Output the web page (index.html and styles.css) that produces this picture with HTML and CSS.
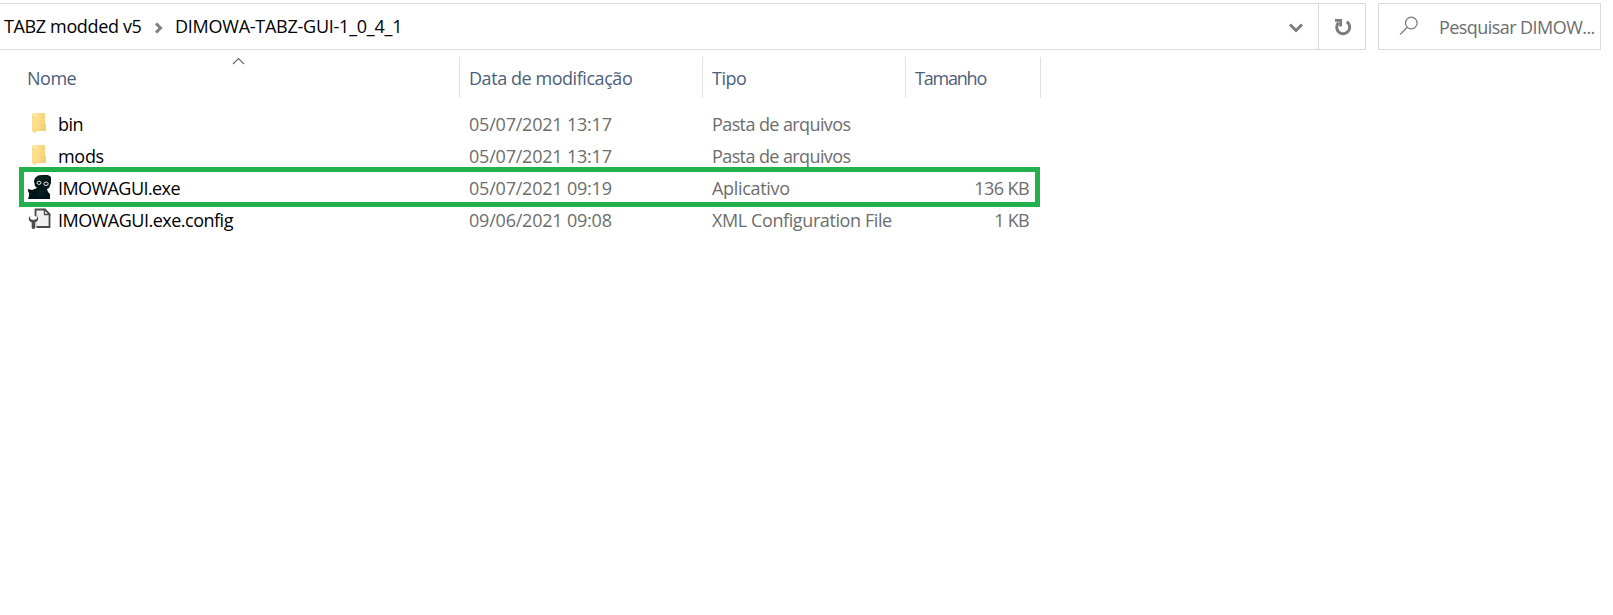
FILE: index.html
```
<!DOCTYPE html>
<html lang="pt-BR">
<head>
<meta charset="utf-8">
<title>DIMOWA-TABZ-GUI-1_0_4_1</title>
<link rel="stylesheet" href="styles.css">
</head>
<body>
<header class="toolbar">
  <nav class="address">
    <span class="crumb crumb-parent">TABZ modded v5</span>
    <svg class="crumb-arrow" width="10" height="12" viewBox="0 0 10 12"><path d="M2 1.500 6.500 6 2 10.500" fill="none" stroke="#808080" stroke-width="3"/></svg>
    <span class="crumb crumb-current">DIMOWA-TABZ-GUI-1_0_4_1</span>
    <svg class="dropdown" width="16" height="12" viewBox="0 0 16 12"><path d="M2 2.500 8 8.500 14 2.500" fill="none" stroke="#7c7c7c" stroke-width="3"/></svg>
    <button class="refresh" aria-label="Atualizar">
      <svg width="18" height="18" viewBox="0 0 18 18"><path d="M4.600 4.600A6.500 6.500 0 1 0 12.800 3.800" fill="none" stroke="#7c7c7c" stroke-width="3"/><path d="M1 1H8V8.500H5.300V3.800H1Z" fill="#7c7c7c"/></svg>
    </button>
  </nav>
  <div class="search">
    <svg width="20" height="20" viewBox="0 0 20 20"><circle cx="12.300" cy="7" r="5.800" fill="none" stroke="#777" stroke-width="1.200"/><path d="M8.200 11.200 1 18.600" stroke="#777" stroke-width="1.300"/></svg>
    <span class="search-text">Pesquisar DIMOW...</span>
  </div>
</header>

<main class="files">
  <div class="columns">
    <div class="column name-column"><span class="label-name">Nome</span>
      <svg class="sort" width="13" height="8" viewBox="0 0 13 8"><path d="M1 7 6.500 1.500 12 7" fill="none" stroke="#666" stroke-width="1.100"/></svg>
    </div>
    <div class="column"><span class="label-date">Data de modificação</span></div>
    <div class="column"><span class="label-type">Tipo</span></div>
    <div class="column"><span class="label-size">Tamanho</span></div>
  </div>

  <div class="row">
    <div class="name"><svg class="icon" width="26" height="26" viewBox="0 0 26 26"><defs><linearGradient id="folder" x1="0" x2="1" y1="0" y2="0.400"><stop offset="0" stop-color="#fde8a4"/><stop offset="1" stop-color="#f5d071"/></linearGradient></defs><path d="M7 2H19V13H20V20H10V22Z" fill="url(#folder)"/><path d="M6 2 10 4.500V22.500L6 20.500Z" fill="#fbdd8b"/><path d="M6 2H7.500L10 4.500V6L6 3Z" fill="#ffedb8"/></svg><span class="text-bin">bin</span></div>
    <div class="date">05/07/2021 13:17</div>
    <div class="type type-folder">Pasta de arquivos</div>
    <div class="size"></div>
  </div>
  <div class="row">
    <div class="name"><svg class="icon" width="26" height="26" viewBox="0 0 26 26"><path d="M7 2H19V13H20V20H10V22Z" fill="url(#folder)"/><path d="M6 2 10 4.500V22.500L6 20.500Z" fill="#fbdd8b"/><path d="M6 2H7.500L10 4.500V6L6 3Z" fill="#ffedb8"/></svg><span class="text-mods">mods</span></div>
    <div class="date">05/07/2021 13:17</div>
    <div class="type type-folder">Pasta de arquivos</div>
    <div class="size"></div>
  </div>
  <div class="row marked">
    <div class="name"><svg class="icon" width="26" height="26" viewBox="0 0 26 26"><path d="M12 .5 16 0H22L25 2V8L23 13 21 14 22 17 24 19V24H2L3 21V18L2 16V14L6 15 11 13 9 11 8 6 9 3Z" fill="#03141a"/><path d="M12 1.500H22L24 4 17 4.500 10 5Z" fill="#08281f"/><path d="M13 15 19 16 17 21 12 20Z" fill="#06201f"/><ellipse cx="13" cy="7.800" rx="2" ry="1.600" fill="#05090c" stroke="#e9eff0"/><ellipse cx="20" cy="8.800" rx="2.200" ry="1.700" fill="#05090c" stroke="#e9eff0"/></svg><span class="text-exe">IMOWAGUI.exe</span></div>
    <div class="date">05/07/2021 09:19</div>
    <div class="type type-app">Aplicativo</div>
    <div class="size">136 KB</div>
  </div>
  <div class="row">
    <div class="name"><svg class="icon" width="26" height="26" viewBox="0 0 26 26"><g transform="translate(1 .5)"><path d="M8.500 2H18L22.500 6.500V19.500H8.500Z" fill="#f0f0f3" stroke="#4a4a4a" stroke-width="1.800"/><path d="M17.500 2V7H22.500Z" fill="#fff" stroke="#4a4a4a" stroke-width="1.300"/><path d="M3.500 9V12L6 14V21H7V14L9.500 12V9" fill="#fff" stroke="#fff" stroke-width="5"/><path d="M3.200 8.500C1 10 1.200 13.500 4.700 15V20.500Q6.500 22.500 8.300 20.500V15C11.800 13.500 12 10 9.800 8.500V11.500L6.500 12.500 3.200 11.500Z" fill="#4a4a4a"/></g></svg><span class="text-config">IMOWAGUI.exe.config</span></div>
    <div class="date">09/06/2021 09:08</div>
    <div class="type type-xml">XML Configuration File</div>
    <div class="size size-small">1 KB</div>
  </div>
</main>
</body>
</html>
```
FILE: styles.css
```
* { box-sizing: border-box; }
body {
  margin: 0;
  padding-top: 3px;
  background: #fff;
  color: #000;
  font: 18px/30px "Open Sans", "Noto Sans", sans-serif;
  white-space: nowrap;
}
svg { display: block; flex: none; }

.toolbar { display: flex; gap: 12px; height: 47px; }
.address {
  display: flex;
  align-items: center;
  width: 1366px;
  padding-left: 4px;
  border: 1px solid #d9d9d9;
  border-left: 0;
}
.crumb { margin-top: -2px; }
.crumb-parent { width: 137px; letter-spacing: -.36px; }
.crumb-arrow { margin: 2px 11px 0 13px; }
.crumb-current { letter-spacing: -.25px; }
.dropdown { margin: 2px 14px 0 auto; }
.refresh {
  display: flex;
  align-items: center;
  justify-content: center;
  width: 47px;
  height: 45px;
  padding: 0 0 0 2px;
  border: 0;
  border-left: 1px solid #d9d9d9;
  background: none;
}
.search {
  display: flex;
  align-items: center;
  width: 223px;
  padding-left: 20px;
  border: 1px solid #d9d9d9;
  color: #6d6d6d;
}
.search svg { margin-top: -2px; }
.search-text { margin-left: 20px; letter-spacing: -.56px; }

.files { width: 1041px; }
.columns, .row {
  display: grid;
  grid-template-columns: 460px 243px 203px 135px;
}
.columns { height: 41px; margin: 7px 0 11px; color: #4c607a; }
.column {
  position: relative;
  padding: 6px 0 0 9px;
  border-right: 1px solid #e2e2e2;
}
.name-column { padding-left: 27px; }
.sort { position: absolute; left: 232px; top: 0; }
.label-name, .label-type { letter-spacing: -.5px; }
.label-date { letter-spacing: -.44px; }
.label-size { letter-spacing: -1.2px; }

.row { position: relative; height: 32px; color: #6d6d6d; }
.name { display: flex; align-items: center; height: 30px; padding-left: 26px; color: #000; }
.icon { margin: 0 6px 0 0; }
.date { padding-left: 9px; letter-spacing: -.21px; }
.type { padding-left: 9px; }
.size { padding-right: 12px; text-align: right; letter-spacing: -.58px; }
.size-small { letter-spacing: -.7px; }
.text-bin, .text-config { letter-spacing: -.5px; }
.text-mods { letter-spacing: -.3px; }
.text-exe { letter-spacing: -.57px; }
.type-folder { letter-spacing: -.6px; }
.type-app { letter-spacing: -.31px; }
.type-xml { letter-spacing: -.4px; }

.marked::after {
  content: "";
  position: absolute;
  inset: -6px 1px -2px 19px;
  border: 5px solid #22b14c;
}
```
